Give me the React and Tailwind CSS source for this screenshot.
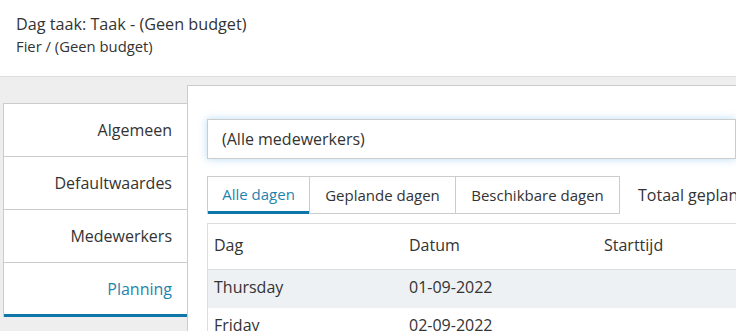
export default function App() {
  const navItems = ["Algemeen", "Defaultwaardes", "Medewerkers"];
  return (
    <div className="w-[736px] h-[331px] overflow-hidden bg-[#eeeeee] text-[#333333]" style={{ fontFamily: '"Open Sans", sans-serif' }}>
      <div className="h-[77px] bg-white border-b border-[#dddddd] pl-4 pt-[13px]">
        <div className="text-[16.2px] leading-[22px]">Dag taak: Taak - (Geen budget)</div>
        <div className="text-[14.8px] leading-[22px]">Fier / (Geen budget)</div>
      </div>
      <div className="flex pl-[3px] pt-[8px]">
        <div className="w-[184px] shrink-0 mt-[18px] bg-white border-l border-t border-[#cccccc] self-start">
          {navItems.map((t) => (
            <div key={t} className="h-[53px] border-b border-[#cccccc] flex items-center justify-end pr-[15px] text-[16px]">
              {t}
            </div>
          ))}
          <div className="h-[54px] flex items-center justify-end pr-[15px] text-[16px] text-[#1f84ad] border-b-[3px] border-[#0e76a8]">
            Planning
          </div>
        </div>
        <div className="flex-1 min-w-0 h-[260px] bg-white border-l border-t border-[#cccccc] pl-[19px] pt-[33px]">
          <div className="h-[40px] border border-[#cccccc] flex items-center pl-[14px] text-[16px] shadow-[0_0_8px_rgba(102,175,233,0.45)]">
            (Alle medewerkers)
          </div>
          <div className="flex items-center mt-[17px] h-[38px]">
            <div className="h-[38px] w-[103px] shrink-0 border border-[#cccccc] border-b-0 flex flex-col text-[15px] text-[#1f84ad]">
              <div className="flex-1 flex items-center justify-center">Alle dagen</div>
              <div className="h-[3px] bg-[#0e76a8]" />
            </div>
            <div className="h-[38px] w-[146px] shrink-0 border border-l-0 border-[#cccccc] flex items-center justify-center text-[15px]">
              Geplande dagen
            </div>
            <div className="h-[38px] w-[164px] shrink-0 border border-l-0 border-[#cccccc] flex items-center justify-center text-[15px]">
              Beschikbare dagen
            </div>
            <div className="ml-[18px] text-[16px] whitespace-nowrap">Totaal gepland: 0</div>
          </div>
          <div className="mt-[9px] border-l border-t border-[#dddddd]">
            <div className="h-[46px] flex items-center pb-[4px] border-b border-[#dddddd] text-[16px]">
              <div className="w-[195px] shrink-0 pl-[6px]">Dag</div>
              <div className="w-[195px] shrink-0 pl-[6px]">Datum</div>
              <div className="pl-[6px]">Starttijd</div>
            </div>
            <div className="h-[38px] flex items-center pb-[4px] bg-[#eef1f4] text-[16px]">
              <div className="w-[195px] shrink-0 pl-[6px]">Thursday</div>
              <div className="w-[195px] shrink-0 pl-[6px]">01-09-2022</div>
            </div>
            <div className="h-[38px] flex items-center pb-[4px] text-[16px]">
              <div className="w-[195px] shrink-0 pl-[6px]">Friday</div>
              <div className="w-[195px] shrink-0 pl-[6px]">02-09-2022</div>
            </div>
          </div>
        </div>
      </div>
    </div>
  );
}
